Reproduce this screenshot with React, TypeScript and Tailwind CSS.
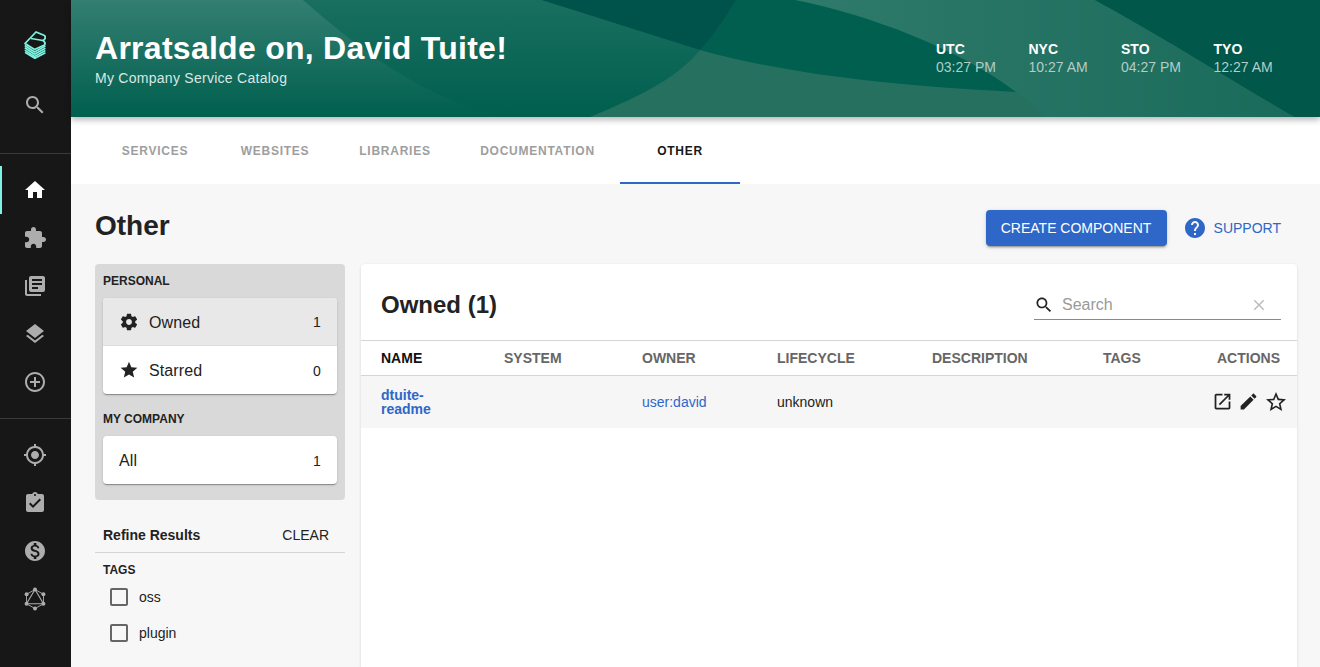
import React from "react";

const P: Record<string, string> = {
  search: "M15.5 14h-.79l-.28-.27C15.41 12.59 16 11.11 16 9.5 16 5.91 13.09 3 9.5 3S3 5.91 3 9.5 5.91 16 9.5 16c1.61 0 3.09-.59 4.23-1.57l.27.28v.79l5 4.99L20.49 19l-4.99-5zm-6 0C7.01 14 5 11.99 5 9.5S7.01 5 9.5 5 14 7.01 14 9.5 11.99 14 9.5 14z",
  home: "M10 20v-6h4v6h5v-8h3L12 3 2 12h3v8z",
  ext: "M20.5 11H19V7c0-1.1-.9-2-2-2h-4V3.5C13 2.12 11.88 1 10.5 1S8 2.12 8 3.5V5H4c-1.1 0-1.99.9-1.99 2v3.8H3.5c1.49 0 2.7 1.21 2.7 2.7s-1.21 2.7-2.7 2.7H2V20c0 1.1.9 2 2 2h3.8v-1.5c0-1.49 1.21-2.7 2.7-2.7 1.49 0 2.7 1.21 2.7 2.7V22H17c1.1 0 2-.9 2-2v-4h1.5c1.38 0 2.5-1.12 2.5-2.5S21.88 11 20.5 11z",
  lib: "M4 6H2v14c0 1.1.9 2 2 2h14v-2H4V6zm16-4H8c-1.1 0-2 .9-2 2v12c0 1.1.9 2 2 2h12c1.1 0 2-.9 2-2V4c0-1.1-.9-2-2-2zm-1 9H9V9h10v2zm-4 4H9v-2h6v2zm4-8H9V5h10v2z",
  layers: "M11.99 18.54l-7.37-5.73L3 14.07l9 7 9-7-1.63-1.27-7.38 5.74zM12 16l7.36-5.73L21 9l-9-7-9 7 1.63 1.27L12 16z",
  add: "M13 7h-2v4H7v2h4v4h2v-4h4v-2h-4V7zm-1-5C6.48 2 2 6.48 2 12s4.48 10 10 10 10-4.48 10-10S17.52 2 12 2zm0 18c-4.41 0-8-3.59-8-8s3.59-8 8-8 8 3.59 8 8-3.59 8-8 8z",
  gps: "M12 8c-2.21 0-4 1.79-4 4s1.79 4 4 4 4-1.79 4-4-1.79-4-4-4zm8.94 3c-.46-4.17-3.77-7.48-7.94-7.94V1h-2v2.06C6.83 3.52 3.52 6.83 3.06 11H1v2h2.06c.46 4.17 3.77 7.48 7.94 7.94V23h2v-2.06c4.17-.46 7.48-3.77 7.94-7.94H23v-2h-2.06zM12 19c-3.87 0-7-3.13-7-7s3.13-7 7-7 7 3.13 7 7-3.13 7-7 7z",
  task: "M19 3h-4.18C14.4 1.84 13.3 1 12 1c-1.3 0-2.4.84-2.82 2H5c-1.1 0-2 .9-2 2v14c0 1.1.9 2 2 2h14c1.1 0 2-.9 2-2V5c0-1.1-.9-2-2-2zm-7 0c.55 0 1 .45 1 1s-.45 1-1 1-1-.45-1-1 .45-1 1-1zm-2 14l-4-4 1.41-1.41L10 14.17l6.59-6.59L18 9l-8 8z",
  money: "M12 2C6.48 2 2 6.48 2 12s4.48 10 10 10 10-4.48 10-10S17.52 2 12 2zm1.41 16.09V20h-2.67v-1.93c-1.71-.36-3.16-1.46-3.27-3.4h1.96c.1 1.05.82 1.87 2.65 1.87 1.96 0 2.4-.98 2.4-1.59 0-.83-.44-1.61-2.67-2.14-2.48-.6-4.18-1.62-4.18-3.67 0-1.72 1.39-2.84 3.11-3.21V4h2.67v1.95c1.86.45 2.79 1.86 2.85 3.39H14.3c-.05-1.11-.64-1.87-2.22-1.87-1.5 0-2.4.68-2.4 1.64 0 .84.65 1.39 2.67 1.91s4.18 1.39 4.18 3.91c-.01 1.83-1.38 2.83-3.12 3.16z",
  gear: "M19.43 12.98c.04-.32.07-.64.07-.98s-.03-.66-.07-.98l2.11-1.65c.19-.15.24-.42.12-.64l-2-3.46c-.12-.22-.39-.3-.61-.22l-2.49 1c-.52-.4-1.08-.73-1.69-.98l-.38-2.65C14.46 2.18 14.25 2 14 2h-4c-.25 0-.46.18-.49.42l-.38 2.65c-.61.25-1.17.59-1.69.98l-2.49-1c-.23-.09-.49 0-.61.22l-2 3.46c-.13.22-.07.49.12.64l2.11 1.65c-.04.32-.07.65-.07.98s.03.66.07.98l-2.11 1.65c-.19.15-.24.42-.12.64l2 3.46c.12.22.39.3.61.22l2.49-1c.52.4 1.08.73 1.69.98l.38 2.65c.03.24.24.42.49.42h4c.25 0 .46-.18.49-.42l.38-2.65c.61-.25 1.17-.59 1.69-.98l2.49 1c.23.09.49 0 .61-.22l2-3.46c.12-.22.07-.49-.12-.64l-2.11-1.65zM12 15.5c-1.93 0-3.5-1.57-3.5-3.5s1.57-3.5 3.5-3.5 3.5 1.57 3.5 3.5-1.57 3.5-3.5 3.5z",
  star: "M12 17.27L18.18 21l-1.64-7.03L22 9.24l-7.19-.61L12 2 9.19 8.63 2 9.24l5.46 4.73L5.82 21z",
  starO: "M22 9.24l-7.19-.62L12 2 9.19 8.63 2 9.24l5.46 4.73L5.82 21 12 17.27 18.18 21l-1.63-7.03L22 9.24zM12 15.4l-3.76 2.27 1-4.28-3.32-2.88 4.38-.38L12 6.1l1.71 4.04 4.38.38-3.32 2.88 1 4.28L12 15.4z",
  edit: "M3 17.25V21h3.75L17.81 9.94l-3.75-3.75L3 17.25zM20.71 7.04c.39-.39.39-1.02 0-1.41l-2.34-2.34c-.39-.39-1.02-.39-1.41 0l-1.83 1.83 3.75 3.75 1.83-1.83z",
  open: "M19 19H5V5h7V3H5c-1.11 0-2 .9-2 2v14c0 1.1.89 2 2 2h14c1.1 0 2-.9 2-2v-7h-2v7zM14 3v2h3.59l-9.83 9.83 1.41 1.41L19 6.41V10h2V3h-7z",
  help: "M12 2C6.48 2 2 6.48 2 12s4.48 10 10 10 10-4.48 10-10S17.52 2 12 2zm1 17h-2v-2h2v2zm2.07-7.75l-.9.92C13.45 12.9 13 13.5 13 15h-2v-.5c0-1.1.45-2.1 1.17-2.83l1.24-1.26c.37-.36.59-.86.59-1.41 0-1.1-.9-2-2-2s-2 .9-2 2H8c0-2.21 1.79-4 4-4s4 1.79 4 4c0 .88-.36 1.68-.93 2.25z",
  clear: "M19 6.41L17.59 5 12 10.59 6.41 5 5 6.41 10.59 12 5 17.59 6.41 19 12 13.41 17.59 19 19 17.59 13.41 12z",
  box: "M19 5v14H5V5h14m0-2H5c-1.1 0-2 .9-2 2v14c0 1.1.89 2 2 2h14c1.1 0 2-.9 2-2V5c0-1.1-.9-2-2-2z",
};

function I({ n, className }: { n: string; className: string }) {
  return (
    <svg viewBox="0 0 24 24" fill="currentColor" className={className}>
      <path d={P[n]} />
    </svg>
  );
}

function Logo() {
  return (
    <svg viewBox="0 0 22 28" className="w-[22px] h-[28px]" fill="none" stroke="#7df3e1" strokeWidth="1.7" strokeLinejoin="round">
      <path d="M1 12.5 L12 1 L20.5 4.5 Q22.5 7.5 19 9.5 Q22 11.5 20.5 14 L10.5 18.5 Z" strokeWidth="1.8" />
      <path d="M19 9.5 L7 7.5" strokeWidth="1.5" />
      <path d="M0.8 14.5 L10.5 21 L21.4 15" />
      <path d="M0.8 16.8 L10.5 23.3 L21.4 17.3" />
      <path d="M0.8 19.1 L10.5 25.5 L21.4 19.6" />
      <path d="M1 21.2 L10.8 27.3 L21.4 21.8" />
    </svg>
  );
}

function GraphQL() {
  return (
    <svg viewBox="0 0 24 24" className="w-[24px] h-[24px]" fill="none" stroke="currentColor">
      <path d="M12 2.5 L20.5 7.3 V16.8 L12 21.5 L3.5 16.8 V7.3 Z" strokeWidth="0.9" />
      <path d="M12 2.5 L20.5 16.8 H3.5 Z" strokeWidth="1.1" />
      <g fill="currentColor" stroke="none">
        <circle cx="12" cy="2.6" r="2" />
        <circle cx="20.4" cy="7.3" r="2" />
        <circle cx="20.4" cy="16.8" r="2" />
        <circle cx="12" cy="21.4" r="2" />
        <circle cx="3.6" cy="16.8" r="2" />
        <circle cx="3.6" cy="7.3" r="2" />
      </g>
    </svg>
  );
}

function NavIcon({ children, active }: { children: React.ReactNode; active?: boolean }) {
  return (
    <div className={`relative h-[48px] flex items-center justify-center pr-[1px] ${active ? "text-white" : "text-[#adadad]"}`}>
      {active && <span className="absolute left-0 top-0 h-[48px] w-[2px] bg-[#7df3e1]" />}
      {children}
    </div>
  );
}

function Sidebar() {
  return (
    <aside className="w-[71px] shrink-0 bg-[#171717] flex flex-col h-[667px]">
      <div className="h-[82px] pt-[31px] flex justify-center pr-[2px]"><Logo /></div>
      <div className="h-[72px] border-b border-[#3a3a3a] flex justify-center pr-[1px] text-[#adadad]">
        <I n="search" className="w-[24px] h-[24px] mt-[11px]" />
      </div>
      <div className="pt-[12px] pb-[12px] border-b border-[#3a3a3a]">
        <NavIcon active><I n="home" className="w-[24px] h-[24px]" /></NavIcon>
        <NavIcon><I n="ext" className="w-[24px] h-[24px]" /></NavIcon>
        <NavIcon><I n="lib" className="w-[24px] h-[24px]" /></NavIcon>
        <NavIcon><I n="layers" className="w-[24px] h-[24px]" /></NavIcon>
        <NavIcon><I n="add" className="w-[24px] h-[24px]" /></NavIcon>
      </div>
      <div className="pt-[12px]">
        <NavIcon><I n="gps" className="w-[24px] h-[24px]" /></NavIcon>
        <NavIcon><I n="task" className="w-[24px] h-[24px]" /></NavIcon>
        <NavIcon><I n="money" className="w-[24px] h-[24px]" /></NavIcon>
        <NavIcon><GraphQL /></NavIcon>
      </div>
    </aside>
  );
}

function Clock({ z, t }: { z: string; t: string }) {
  return (
    <div className="w-[92.5px]">
      <div className="text-[14px] leading-[18px] font-bold text-white">{z}</div>
      <div className="text-[14px] leading-[18px] text-[#b3cdc7]">{t}</div>
    </div>
  );
}

function Header() {
  return (
    <header className="relative z-10 h-[117px] bg-[#005f4e] shadow-[0_3px_6px_rgba(0,0,0,0.28)] overflow-hidden flex items-start justify-between pl-[24px]">
      <svg viewBox="0 0 1249 117" preserveAspectRatio="none" className="absolute inset-0 w-full h-full">
        <defs>
          <linearGradient id="fadeA" x1="0" y1="0" x2="0" y2="1">
            <stop offset="0" stopColor="#ffffff" stopOpacity="0.2" />
            <stop offset="1" stopColor="#ffffff" stopOpacity="0" />
          </linearGradient>
          <linearGradient id="fadeB" x1="0" y1="0" x2="0" y2="1">
            <stop offset="0" stopColor="#ffffff" stopOpacity="0.1" />
            <stop offset="1" stopColor="#ffffff" stopOpacity="0" />
          </linearGradient>
          <linearGradient id="band" x1="0" y1="0" x2="1" y2="0">
            <stop offset="0" stopColor="#2f7a6b" />
            <stop offset="1" stopColor="#1a6b5b" />
          </linearGradient>
        </defs>
        <path d="M0 0 H232 C290 50 340 90 427 117 H0 Z" fill="url(#fadeA)" />
        <path d="M232 0 H471 L631 50 C600 85 560 105 519 117 H427 C340 90 290 50 232 0 Z" fill="url(#fadeB)" />
        <path d="M471 0 L629 50 C645 32 658 12 665 0 Z" fill="#00534a" />
        <path d="M519 117 C560 100 605 80 629 50 C700 70 800 85 945 92 C1040 100 1130 105 1224 117 Z" fill="#25705f" />
        <path d="M724 0 C800 15 890 50 945 92 C958 100 965 105 973 117 H1224 C1160 80 1080 30 1024 0 Z" fill="url(#band)" />
        <path d="M1024 0 C1080 30 1160 80 1224 117 H1249 V0 Z" fill="#00574a" />
      </svg>
      <div className="relative pt-[28px]">
        <h1 className="text-[32px] leading-[40px] font-bold text-white tracking-[0.27px]">Arratsalde on, David Tuite!</h1>
        <p className="text-[14px] leading-[20px] text-[#dbe7e4] tracking-[0.27px]">My Company Service Catalog</p>
      </div>
      <div className="relative flex pt-[40px] mr-[9px] w-[375px]">
        <Clock z="UTC" t="03:27 PM" />
        <Clock z="NYC" t="10:27 AM" />
        <Clock z="STO" t="04:27 PM" />
        <Clock z="TYO" t="12:27 AM" />
      </div>
    </header>
  );
}

function Tab({ label, w, active }: { label: string; w: string; active?: boolean }) {
  return (
    <div className={`h-[67px] flex items-center justify-center text-[12px] font-bold tracking-[0.75px] ${w} ${active ? "pt-[3px] text-[#181818] border-b-[2px] border-[#2e67c8]" : "pt-[1px] text-[#9e9e9e]"}`}>
      {label}
    </div>
  );
}

function Tabs() {
  return (
    <nav className="h-[67px] bg-white flex pl-[24px]">
      <Tab label="SERVICES" w="w-[120px]" />
      <Tab label="WEBSITES" w="w-[120px]" />
      <Tab label="LIBRARIES" w="w-[120px]" />
      <Tab label="DOCUMENTATION" w="w-[165px]" />
      <Tab label="OTHER" w="w-[120px]" active />
    </nav>
  );
}

function FilterRow({ icon, label, n, selected }: { icon?: string; label: string; n: string; selected?: boolean }) {
  return (
    <div className={`h-[48px] flex items-center pl-[16px] pr-[16px] pt-[2px] text-[16px] tracking-[0.1px] text-[#222222] ${selected ? "bg-[#e8e8e8] border-b border-[#dcdcdc]" : ""}`}>
      {icon && <I n={icon} className="w-[20px] h-[20px] mr-[10px] mt-[-2px] text-[#222222]" />}
      <span className="flex-1">{label}</span>
      <span className="text-[14px]">{n}</span>
    </div>
  );
}

function Card({ children }: { children: React.ReactNode }) {
  return (
    <div className="bg-white rounded-[4px] overflow-hidden shadow-[0_2px_1px_-1px_rgba(0,0,0,0.2),0_1px_1px_0_rgba(0,0,0,0.14),0_1px_3px_0_rgba(0,0,0,0.12)]">
      {children}
    </div>
  );
}

function Filters() {
  return (
    <div className="w-[250px] shrink-0">
      <div className="bg-[#d9d9d9] rounded-[4px] px-[8px] pt-[8px] pb-[16px]">
        <div className="text-[12px] leading-[18px] font-bold text-[#222222] mb-[8px]">PERSONAL</div>
        <Card>
          <FilterRow icon="gear" label="Owned" n="1" selected />
          <FilterRow icon="star" label="Starred" n="0" />
        </Card>
        <div className="text-[12px] leading-[18px] font-bold text-[#222222] mt-[16px] mb-[8px]">MY COMPANY</div>
        <Card>
          <FilterRow label="All" n="1" />
        </Card>
      </div>
      <div className="flex items-center justify-between h-[53px] pl-[8px] pr-[16px] pt-[19px] border-b border-[#d5d5d5] text-[#222222]">
        <span className="text-[14px] font-bold">Refine Results</span>
        <span className="text-[14px]">CLEAR</span>
      </div>
      <div className="pl-[8px] pt-[8px] text-[#222222]">
        <div className="text-[12px] leading-[18px] font-bold">TAGS</div>
        <div className="flex items-center h-[36px] text-[14px] pl-[4px]">
          <I n="box" className="w-[24px] h-[24px] text-[#666666] mr-[8px]" />
          <span>oss</span>
        </div>
        <div className="flex items-center h-[36px] text-[14px] pl-[4px]">
          <I n="box" className="w-[24px] h-[24px] text-[#666666] mr-[8px]" />
          <span>plugin</span>
        </div>
      </div>
    </div>
  );
}

function Th({ label, w, dark, right }: { label: string; w: string; dark?: boolean; right?: boolean }) {
  return (
    <div className={`${w} shrink-0 text-[14px] font-bold ${dark ? "text-[#111111]" : "text-[#666666]"} ${right ? "text-right" : ""}`}>{label}</div>
  );
}

function Table() {
  return (
    <section className="flex-1 bg-white rounded-t-[4px] shadow-[0_1px_3px_rgba(0,0,0,0.14)] h-[403px] min-w-0">
      <div className="h-[76px] flex items-center justify-between pl-[20px] pr-[16px]">
        <h2 className="text-[24px] font-bold text-[#222222] mt-[5px]">Owned (1)</h2>
        <div className="w-[247px] h-[32px] mt-[3px] pt-[4px] border-b border-[#8a8a8a] flex items-center text-[#9a9a9a]">
          <I n="search" className="w-[20px] h-[20px] text-[#222222] mr-[8px]" />
          <span className="flex-1 text-[16px]">Search</span>
          <I n="clear" className="w-[18px] h-[18px] mr-[13px] text-[#bdbdbd]" />
        </div>
      </div>
      <div className="h-[36px] flex items-center border-y border-[#d5d5d5] pl-[20px] pr-[17px]">
        <Th label="NAME" w="w-[123px]" dark />
        <Th label="SYSTEM" w="w-[138px]" />
        <Th label="OWNER" w="w-[135px]" />
        <Th label="LIFECYCLE" w="w-[155px]" />
        <Th label="DESCRIPTION" w="w-[171px]" />
        <Th label="TAGS" w="w-[78px]" />
        <Th label="ACTIONS" w="flex-1" right />
      </div>
      <div className="h-[52px] flex items-center bg-[#f6f6f6] pl-[20px] pr-[9px] text-[14px]">
        <div className="w-[123px] shrink-0 text-[#2e67c8] font-bold leading-[14px]">dtuite-<br />readme</div>
        <div className="w-[138px] shrink-0" />
        <div className="w-[135px] shrink-0 text-[#2e67c8]">user:david</div>
        <div className="w-[155px] shrink-0 text-[#222222]">unknown</div>
        <div className="flex-1 flex justify-end items-center gap-[5px] text-[#222222]">
          <I n="open" className="w-[21px] h-[21px] mt-[-1px]" />
          <I n="edit" className="w-[21px] h-[21px] mt-[-1px]" />
          <I n="starO" className="w-[24px] h-[24px] mt-[-1px]" />
        </div>
      </div>
    </section>
  );
}

export default function App() {
  return (
    <div className="flex h-[667px] w-[1320px] overflow-hidden bg-[#f7f7f7] font-['Liberation_Sans',Arial,sans-serif]">
      <Sidebar />
      <main className="flex-1 min-w-0">
        <Header />
        <Tabs />
        <div className="flex items-center justify-between h-[80px] pt-[8px] pl-[24px] pr-[39px]">
          <h2 className="text-[28px] font-bold text-[#222222] mb-[4px]">Other</h2>
          <div className="flex items-center">
            <button className="w-[181px] h-[36px] bg-[#2e67c8] text-white text-[14px] rounded-[4px] shadow-[0_3px_1px_-2px_rgba(0,0,0,0.2),0_2px_2px_0_rgba(0,0,0,0.14),0_1px_5px_0_rgba(0,0,0,0.12)]">CREATE COMPONENT</button>
            <div className="flex items-center ml-[16px] text-[#2e67c8] text-[14px]">
              <I n="help" className="w-[24px] h-[24px] mr-[7px]" />
              SUPPORT
            </div>
          </div>
        </div>
        <div className="flex pl-[24px] pr-[23px] gap-[16px]">
          <Filters />
          <Table />
        </div>
      </main>
    </div>
  );
}
